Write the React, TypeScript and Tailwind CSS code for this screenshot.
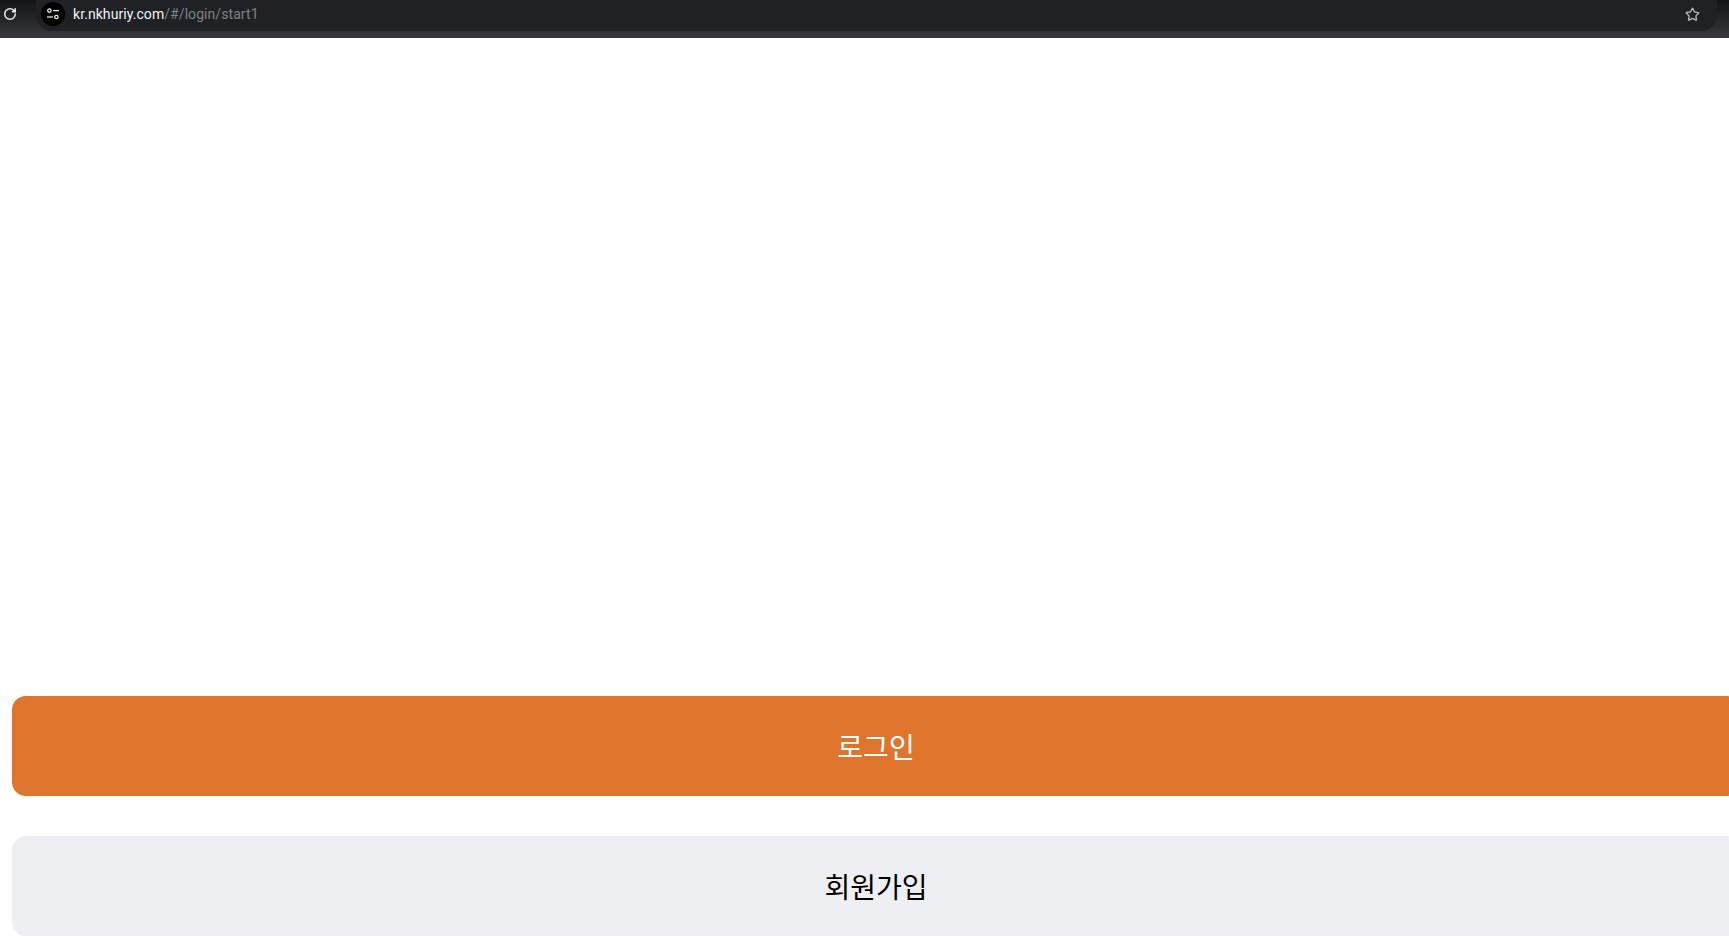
import { RotateCw, Star } from 'lucide-react';

function TopBar() {
  return (
    <div className="flex h-[38px] shrink-0 items-start bg-gradient-to-b from-[#141517] to-[#37383a]">
      <div className="flex h-[28px] w-[36px] shrink-0 items-center pl-[3px]">
        <RotateCw size={14} strokeWidth={2.6} className="text-[#e8eaed]" />
      </div>
      <div className="flex h-[31px] flex-1 items-center rounded-b-[16px] bg-[#1f2125] pl-[5px] pr-[17px] mr-[12px]">
        <span className="flex h-[24px] w-[24px] shrink-0 items-center justify-center rounded-full bg-black -mt-[3px]">
          <svg width="14" height="12" viewBox="0 0 14 12" fill="none" stroke="#e8eaed" strokeWidth="1.3">
            <circle cx="3.4" cy="2.6" r="1.7" />
            <path d="M7 2.6h6" />
            <path d="M1 9h6" />
            <circle cx="10.4" cy="9" r="1.7" />
          </svg>
        </span>
        <span className="ml-[8px] -mt-[3px] text-[14px] leading-[20px] tracking-[0.07px] text-[#f1f3f4] font-['Roboto',sans-serif]">
          kr.nkhuriy.com<span className="text-[#7f8286]">/#/login/start1</span>
        </span>
        <Star size={15} strokeWidth={2.2} className="ml-auto -mt-[3px] text-[#b4b6ba]" />
      </div>
    </div>
  );
}

function WideButton({ label, className }: { label: string; className: string }) {
  return (
    <button
      type="button"
      className={`flex h-[100px] w-[1728px] shrink-0 items-center justify-center rounded-[14px] text-[28px] font-['Noto_Sans_CJK_KR',sans-serif] ${className}`}
    >
      {label}
    </button>
  );
}

export default function App() {
  return (
    <div className="flex h-[950px] w-[1729px] flex-col overflow-hidden bg-white">
      <TopBar />
      <div className="flex flex-1 flex-col gap-[40px] pl-[12px] pt-[658px]">
        <WideButton label="로그인" className="bg-[#df742c] text-white" />
        <WideButton label="회원가입" className="bg-[#eeeff3] text-black" />
      </div>
    </div>
  );
}
